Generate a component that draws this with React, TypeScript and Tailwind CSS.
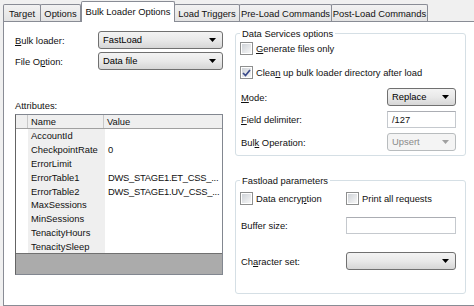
import React from "react";

function U({ children }: { children: React.ReactNode }) {
  return <span className="underline underline-offset-[1px]">{children}</span>;
}

function Arrow({ disabled }: { disabled?: boolean }) {
  return (
    <svg width="7" height="4" viewBox="0 0 7 4" className="shrink-0">
      <path d="M0 0 L7 0 L3.5 4 Z" fill={disabled ? "#a0a0a0" : "#000"} />
    </svg>
  );
}

function Select({ value, w, disabled }: { value: string; w: string; disabled?: boolean }) {
  return (
    <div
      className={
        "h-[18px] rounded-[3px] border flex items-center justify-between pl-[4px] pr-[6px] " +
        w +
        (disabled
          ? " border-[#b8bcbe] bg-[#f4f4f4] text-[#8a8a8a]"
          : " border-[#707070] bg-gradient-to-b from-[#f3f3f3] via-[#e9e9e9] to-[#d6d6d6] text-black")
      }
    >
      <span className="leading-none">{value}</span>
      <Arrow disabled={disabled} />
    </div>
  );
}

function Input({ value, w }: { value?: string; w: string }) {
  return (
    <div
      className={
        "h-[17px] border border-[#c5c9ce] border-t-[#abadb3] bg-white flex items-center pl-[4px] " + w
      }
    >
      <span className="leading-none">{value}</span>
    </div>
  );
}

function Check({ checked }: { checked?: boolean }) {
  return (
    <span className="w-[13px] h-[13px] border border-[#8e8f8f] bg-white p-[1px] shrink-0 flex">
      <span className="flex-1 bg-gradient-to-br from-[#cfd3d8] to-[#f7f7f7] flex items-center justify-center">
        {checked && (
          <svg width="9" height="8" viewBox="0 0 9 8">
            <path d="M1 4 L3.5 6.5 L8 1" fill="none" stroke="#3a4a8a" strokeWidth="1.7" />
          </svg>
        )}
      </span>
    </span>
  );
}

const tabs: { label: string; w: string; sel?: boolean }[] = [
  { label: "Target", w: "w-[38px]" },
  { label: "Options", w: "w-[41px]" },
  { label: "Bulk Loader Options", w: "w-[94px]", sel: true },
  { label: "Load Triggers", w: "w-[66px]" },
  { label: "Pre-Load Commands", w: "w-[93px]" },
  { label: "Post-Load Commands", w: "w-[97px]" },
];

const rows: [string, string][] = [
  ["AccountId", ""],
  ["CheckpointRate", "0"],
  ["ErrorLimit", ""],
  ["ErrorTable1", "DWS_STAGE1.ET_CSS_..."],
  ["ErrorTable2", "DWS_STAGE1.UV_CSS_..."],
  ["MaxSessions", ""],
  ["MinSessions", ""],
  ["TenacityHours", ""],
  ["TenacitySleep", ""],
];

export default function App() {
  return (
    <div className="w-[474px] h-[306px] bg-[#f0f0f0] overflow-hidden flex flex-col font-['Liberation_Sans',Arial,sans-serif] text-[9.4px] text-[#111] leading-[13px]">
      <div className="h-[21px] flex items-end pl-[3px] shrink-0 relative z-10">
        {tabs.map((t) =>
          t.sel ? (
            <div
              key={t.label}
              className={
                "h-[21px] -mb-px bg-white border border-b-0 border-[#898c95] rounded-t-[2px] flex items-center justify-center pb-[2px] shrink-0 whitespace-nowrap " +
                t.w
              }
            >
              {t.label}
            </div>
          ) : (
            <div
              key={t.label}
              className={
                "h-[17px] bg-gradient-to-b from-[#f2f2f2] to-[#e3e3e3] border border-b-0 border-[#898c95] -ml-px first:ml-0 rounded-t-[2px] flex items-center justify-center shrink-0 whitespace-nowrap " +
                t.w
              }
            >
              {t.label}
            </div>
          )
        )}
      </div>
      <div className="ml-[3px] w-[480px] flex-1 border border-[#898c95] bg-white flex pl-[11px] pt-[9px]">
        <div className="w-[208px] flex flex-col shrink-0">
          <div className="flex items-center h-[18px]">
            <span className="w-[83px]">
              <U>B</U>ulk loader:
            </span>
            <Select value="FastLoad" w="w-[125px]" />
          </div>
          <div className="flex items-center h-[18px] mt-[3px]">
            <span className="w-[83px]">
              File O<U>p</U>tion:
            </span>
            <Select value="Data file" w="w-[125px]" />
          </div>
          <div className="mt-[29px] h-[13px]">Attributes:</div>
          <div className="mt-[2px] h-[161px] border border-[#828790] border-l-[#646464] bg-[#ababab] flex flex-col">
            <div className="flex h-[14px] bg-[#efefef] border-b border-[#a0a0a0] shrink-0">
              <div className="w-[12px] border-r border-[#c8c8c8]" />
              <div className="w-[76px] border-r border-[#c8c8c8] pl-[3px] flex items-center">Name</div>
              <div className="flex-1 pl-[3px] flex items-center">Value</div>
            </div>
            <div className="flex flex-col bg-white border-b border-[#707070]">
              {rows.map(([n, v]) => (
                <div key={n} className="flex h-[13.8px]">
                  <div className="w-[12px] bg-white" />
                  <div className="w-[77px] bg-[#efefef] pl-[3px] flex items-center whitespace-nowrap overflow-hidden">
                    {n}
                  </div>
                  <div className="flex-1 pl-[3px] flex items-center whitespace-nowrap overflow-hidden tracking-[-0.25px]">
                    {v}
                  </div>
                </div>
              ))}
            </div>
          </div>
        </div>
        <div className="w-[231px] ml-[12px] flex flex-col shrink-0">
          <fieldset className="mt-[-4px] border border-[#d5dfe5] rounded-[3px] pl-[4px] pr-[9px] pb-[4px]">
            <legend className="px-[2px]">Data Services options</legend>
            <div className="flex items-center gap-[3px] mt-[2px] h-[13px]">
              <Check />
              <span>
                <U>G</U>enerate files only
              </span>
            </div>
            <div className="flex items-center gap-[3px] mt-[11px] h-[13px]">
              <Check checked />
              <span className="whitespace-nowrap">
                Clea<U>n</U> up bulk loader directory after load
              </span>
            </div>
            <div className="flex items-center justify-between mt-[9px] h-[18px]">
              <span className="pl-[1px]">
                <U>M</U>ode:
              </span>
              <Select value="Replace" w="w-[69px]" />
            </div>
            <div className="flex items-center justify-between mt-[5px] h-[17px]">
              <span className="pl-[1px]">
                <U>F</U>ield delimiter:
              </span>
              <Input value="/127" w="w-[69px]" />
            </div>
            <div className="flex items-center justify-between mt-[5px] h-[18px]">
              <span className="pl-[1px]">
                Bul<U>k</U> Operation:
              </span>
              <Select value="Upsert" w="w-[69px]" disabled />
            </div>
          </fieldset>
          <fieldset className="mt-[18px] border border-[#d5dfe5] rounded-[3px] pl-[4px] pr-[9px] pb-[23px]">
            <legend className="px-[2px]">Fastload parameters</legend>
            <div className="flex items-center mt-[5px] h-[13px]">
              <div className="w-[106px] flex items-center gap-[3px]">
                <Check />
                <span>
                  Data encry<U>p</U>tion
                </span>
              </div>
              <div className="flex items-center gap-[3px]">
                <Check />
                <span>Print all requests</span>
              </div>
            </div>
            <div className="flex items-center justify-between mt-[12px] h-[17px]">
              <span className="pl-[1px]">Buffer size:</span>
              <Input w="w-[110px]" />
            </div>
            <div className="flex items-center justify-between mt-[18px] h-[18px]">
              <span className="pl-[1px]">
                Ch<U>a</U>racter set:
              </span>
              <Select value="" w="w-[110px]" />
            </div>
          </fieldset>
        </div>
      </div>
    </div>
  );
}
